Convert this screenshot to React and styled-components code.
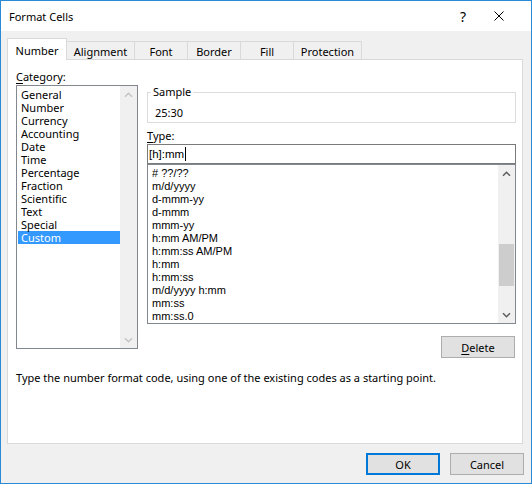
import React from 'react';
import styled, { createGlobalStyle } from 'styled-components';

const UI = `"Noto Sans", "Open Sans", sans-serif`;
const MS = `"Liberation Sans", Arial, sans-serif`;

const Global = createGlobalStyle`
  html, body { margin: 0; padding: 0; background: #ffffff; }
  * { box-sizing: border-box; }
`;

const Window = styled.div`
  width: 532px;
  height: 484px;
  border: 1px solid #2b8ad6;
  background: #f0f0f0;
  display: flex;
  flex-direction: column;
  font-family: ${UI};
  font-size: 11px;
  color: #000;
  overflow: hidden;
`;

const TitleBar = styled.div`
  height: 30px;
  flex: none;
  background: #fff;
  display: flex;
  align-items: center;
  padding: 0 14px 0 8px;
`;

const Title = styled.div`
  flex: 1;
  font-size: 11px;
  padding-top: 1px;
`;

const CaptionButton = styled.div`
  width: 36px;
  height: 30px;
  display: flex;
  align-items: center;
  justify-content: center;
  font-size: 14px;
  color: #000;
`;

const Body = styled.div`
  flex: 1;
  display: flex;
  flex-direction: column;
  padding: 7px 7px 8px 6px;
`;

const TabRow = styled.div`
  display: flex;
  align-items: flex-end;
  height: 21px;
  flex: none;
  position: relative;
  z-index: 1;
`;

const Tab = styled.div`
  width: ${p => p.$w}px;
  height: ${p => (p.$active ? 22 : 18)}px;
  margin-bottom: ${p => (p.$active ? -1 : 0)}px;
  margin-left: -1px;
  &:first-child { margin-left: 0; }
  border: 1px solid #d9d9d9;
  border-bottom: none;
  background: ${p => (p.$active ? '#ffffff' : '#f0f0f0')};
  display: flex;
  align-items: center;
  justify-content: center;
  padding-top: 1px;
  position: relative;
  z-index: ${p => (p.$active ? 2 : 1)};
`;

const Panel = styled.div`
  height: 385px;
  flex: none;
  background: #fff;
  border: 1px solid #d9d9d9;
  margin-right: 1px;
  padding: 8px 6px 0 8px;
  display: grid;
  grid-template-columns: 122px 369px;
  column-gap: 9px;
  align-content: start;
`;

const Column = styled.div`
  display: flex;
  flex-direction: column;
`;

const Label = styled.div`
  height: 17px;
  line-height: 17px;
  margin-top: ${p => p.$mt || 0}px;
`;

const ListBox = styled.div`
  height: ${p => p.$h}px;
  border: 1px solid #828790;
  background: #fff;
  display: flex;
  flex: none;
`;

const Items = styled.div`
  flex: 1;
  padding: 2px 0 0 1px;
  overflow: hidden;
  font-family: ${p => (p.$ms ? MS : UI)};
  font-size: 11px;
`;

const Item = styled.div`
  height: 13px;
  line-height: 13px;
  padding-left: ${p => p.$pl || 3}px;
  white-space: nowrap;
  background: ${p => (p.$selected ? '#3399ff' : 'transparent')};
  color: ${p => (p.$selected ? '#fff' : '#000')};
`;

const ScrollBar = styled.div`
  width: 17px;
  flex: none;
  background: #f0f0f0;
  display: flex;
  flex-direction: column;
`;

const ArrowBtn = styled.div`
  height: 17px;
  flex: none;
  display: flex;
  align-items: center;
  justify-content: center;
  color: ${p => (p.$disabled ? '#c5c5c5' : '#606060')};
`;

const Track = styled.div`
  flex: 1;
  display: flex;
  flex-direction: column;
`;

const Thumb = styled.div`
  height: ${p => p.$h}px;
  margin: ${p => p.$top}px 1px 0 1px;
  background: #cdcdcd;
`;

const Group = styled.fieldset`
  margin: 17px 0 0 0;
  padding: 0 0 0 3px;
  border: 1px solid #dcdcdc;
  height: 38px;
  min-width: 0;
`;

const Legend = styled.legend`
  padding: 0 2px;
  line-height: 14px;
  font-size: 11px;
`;

const SampleValue = styled.div`
  padding-left: 4px;
  margin-top: 6px;
  line-height: 15px;
`;

const TextInput = styled.div`
  height: 20px;
  flex: none;
  border: 1px solid #7a7a7a;
  background: #fff;
  display: flex;
  align-items: center;
  padding-left: 1px;
  font-family: ${MS};
  font-size: 11.5px;
`;

const Caret = styled.span`
  display: inline-block;
  width: 1px;
  height: 14px;
  background: #000;
  margin-left: 1px;
`;

const Button = styled.button`
  width: 74px;
  height: 22px;
  flex: none;
  background: #e1e1e1;
  border: ${p => (p.$default ? '2px solid #0078d7' : '1px solid #adadad')};
  font-family: ${UI};
  font-size: 11px;
  color: #000;
  padding: 0;
  margin: 0;
  display: flex;
  align-items: center;
  justify-content: center;
`;

const DeleteButton = styled(Button)`
  align-self: flex-end;
  margin-top: 12px;
  margin-right: 1px;
`;

const Description = styled.div`
  grid-column: 1 / -1;
  margin-top: 12px;
  line-height: 15px;
  white-space: nowrap;
`;

const Footer = styled.div`
  display: flex;
  justify-content: flex-end;
  gap: 10px;
  margin-top: 9px;
`;

const Mn = styled.span`
  text-decoration: underline;
  text-underline-offset: 2px;
`;

const Chevron = ({ down }) => (
  <svg width="9" height="6" viewBox="0 0 9 6">
    <path
      d={down ? 'M1 1.2 L4.5 4.7 L8 1.2' : 'M1 4.8 L4.5 1.3 L8 4.8'}
      fill="none"
      stroke="currentColor"
      strokeWidth="1.6"
    />
  </svg>
);

const Close = () => (
  <svg width="10" height="10" viewBox="0 0 10 10">
    <path d="M0.5 0.5 L9.5 9.5 M9.5 0.5 L0.5 9.5" stroke="#000" strokeWidth="1" fill="none" />
  </svg>
);

const tabs = [
  ['Number', 60],
  ['Alignment', 69],
  ['Font', 54],
  ['Border', 54],
  ['Fill', 54],
  ['Protection', 69],
];

const categories = [
  'General', 'Number', 'Currency', 'Accounting', 'Date', 'Time',
  'Percentage', 'Fraction', 'Scientific', 'Text', 'Special', 'Custom',
];

const types = [
  '# ??/??', 'm/d/yyyy', 'd-mmm-yy', 'd-mmm', 'mmm-yy', 'h:mm AM/PM',
  'h:mm:ss AM/PM', 'h:mm', 'h:mm:ss', 'm/d/yyyy h:mm', 'mm:ss', 'mm:ss.0',
];

export default function App() {
  return (
    <>
      <Global />
      <Window>
        <TitleBar>
          <Title>Format Cells</Title>
          <CaptionButton>?</CaptionButton>
          <CaptionButton><Close /></CaptionButton>
        </TitleBar>
        <Body>
          <TabRow>
            {tabs.map(([t, w], i) => (
              <Tab key={t} $w={w} $active={i === 0}>{t}</Tab>
            ))}
          </TabRow>
          <Panel>
            <Column>
              <Label><Mn>C</Mn>ategory:</Label>
              <ListBox $h={264}>
                <Items>
                  {categories.map(c => (
                    <Item key={c} $selected={c === 'Custom'}>{c}</Item>
                  ))}
                </Items>
                <ScrollBar>
                  <ArrowBtn $disabled><Chevron /></ArrowBtn>
                  <Track />
                  <ArrowBtn $disabled><Chevron down /></ArrowBtn>
                </ScrollBar>
              </ListBox>
            </Column>
            <Column>
              <Group>
                <Legend>Sample</Legend>
                <SampleValue>25:30</SampleValue>
              </Group>
              <Label $mt={4}><Mn>T</Mn>ype:</Label>
              <TextInput>[h]:mm<Caret /></TextInput>
              <ListBox $h={160}>
                <Items $ms>
                  {types.map(t => (
                    <Item key={t} $pl={3}>{t}</Item>
                  ))}
                </Items>
                <ScrollBar>
                  <ArrowBtn><Chevron /></ArrowBtn>
                  <Track>
                    <Thumb $top={62} $h={42} />
                  </Track>
                  <ArrowBtn><Chevron down /></ArrowBtn>
                </ScrollBar>
              </ListBox>
              <DeleteButton><Mn>D</Mn>elete</DeleteButton>
            </Column>
            <Description>
              Type the number format code, using one of the existing codes as a starting point.
            </Description>
          </Panel>
          <Footer>
            <Button $default>OK</Button>
            <Button>Cancel</Button>
          </Footer>
        </Body>
      </Window>
    </>
  );
}
